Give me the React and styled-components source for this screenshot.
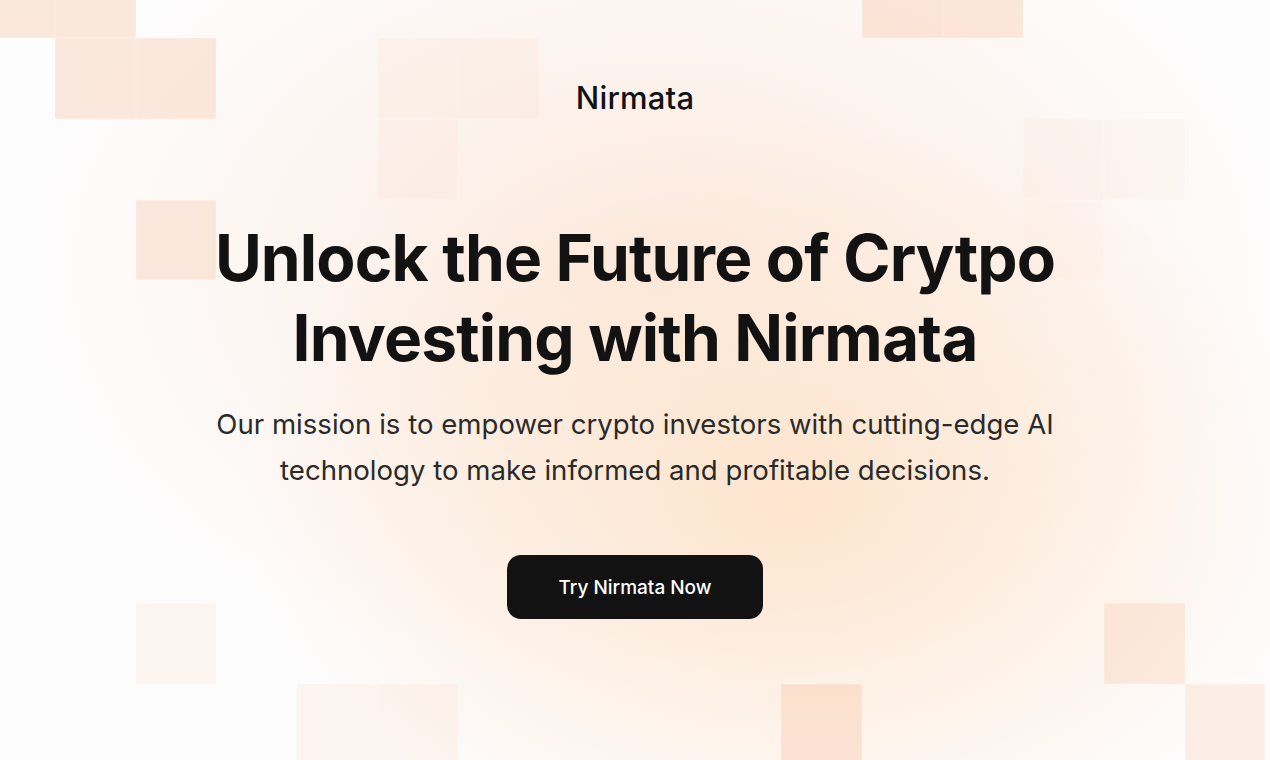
import React from 'react';
import styled, { createGlobalStyle } from 'styled-components';

const GlobalStyle = createGlobalStyle`
  html, body {
    margin: 0;
    padding: 0;
    background: #fdfcfc;
  }
  * {
    box-sizing: border-box;
  }
`;

const PITCH = 80.7;

// [col, row, strength]
const tiles = [
  [0, 0, 0.3], [1, 0, 0.3], [1, 1, 0.3], [2, 1, 0.3], [2, 3, 0.28],
  [5, 1, 0.09], [6, 1, 0.09], [5, 2, 0.07],
  [11, 0, 0.3], [12, 0, 0.3],
  [13, 2, 0.08], [14, 2, 0.08], [13, 3, 0.04],
  [2, 8, 0.12], [4, 9, 0.1], [5, 9, 0.1],
  [10, 9, 0.3], [14, 8, 0.25], [15, 9, 0.2],
];

const App = () => {
  return (
    <Page>
      <GlobalStyle />
      <TileGrid aria-hidden>
        {tiles.map(([c, r, a]) => (
          <Tile key={`${c}-${r}`} $col={c} $row={r} $alpha={a} />
        ))}
      </TileGrid>
      <Content>
        <Logo>Nirmata</Logo>
        <Hero>
          <Title>
            Unlock the Future of Crytpo
            <br />
            Investing with Nirmata
          </Title>
          <Lead>
            Our mission is to empower crypto investors with cutting-edge AI technology to
            make informed and profitable decisions.
          </Lead>
          <CtaButton>Try Nirmata Now</CtaButton>
        </Hero>
      </Content>
    </Page>
  );
};

const Page = styled.div`
  position: relative;
  width: 100%;
  height: 100vh;
  overflow: hidden;
  background:
    radial-gradient(ellipse 540px 380px at 790px 500px, rgba(253, 228, 204, 0.95), rgba(253, 232, 214, 0) 100%),
    radial-gradient(ellipse 620px 420px at 660px 270px, rgba(252, 230, 216, 0.8), rgba(252, 236, 226, 0) 100%),
    #fdfcfc;
`;

const TileGrid = styled.div`
  position: absolute;
  left: -25.7px;
  top: -42.4px;
  display: grid;
  grid-template-columns: repeat(17, ${PITCH}px);
  grid-auto-rows: ${PITCH}px;
  pointer-events: none;
`;

const Tile = styled.div`
  grid-column: ${(p) => p.$col + 1};
  grid-row: ${(p) => p.$row + 1};
  background: rgba(248, 186, 150, ${(p) => p.$alpha});
  box-shadow: inset 0 0 0 0.5px rgba(255, 255, 255, 0.35);
`;

const Content = styled.div`
  position: relative;
  display: flex;
  flex-direction: column;
  align-items: center;
  padding-top: 78px;
  font-family: Inter, 'Noto Sans', sans-serif;
  color: #121212;
`;

const Logo = styled.div`
  font-size: 31px;
  font-weight: 500;
  line-height: 40px;
  letter-spacing: 0.2px;
`;

const Hero = styled.div`
  display: flex;
  flex-direction: column;
  align-items: center;
  margin-top: 100px;
  width: 880px;
  text-align: center;
`;

const Title = styled.h1`
  margin: 0;
  font-size: 64px;
  font-weight: 700;
  line-height: 80px;
  letter-spacing: -0.85px;
`;

const Lead = styled.p`
  margin: 23px 0 0;
  font-size: 27.6px;
  font-weight: 400;
  line-height: 46px;
  color: #2a2a2a;
`;

const CtaButton = styled.button`
  margin-top: 62px;
  width: 256px;
  height: 64px;
  border: none;
  border-radius: 14px;
  background: #121212;
  color: #ffffff;
  font-family: Inter, 'Noto Sans', sans-serif;
  font-size: 19px;
  font-weight: 500;
  cursor: pointer;
`;

export default App;
